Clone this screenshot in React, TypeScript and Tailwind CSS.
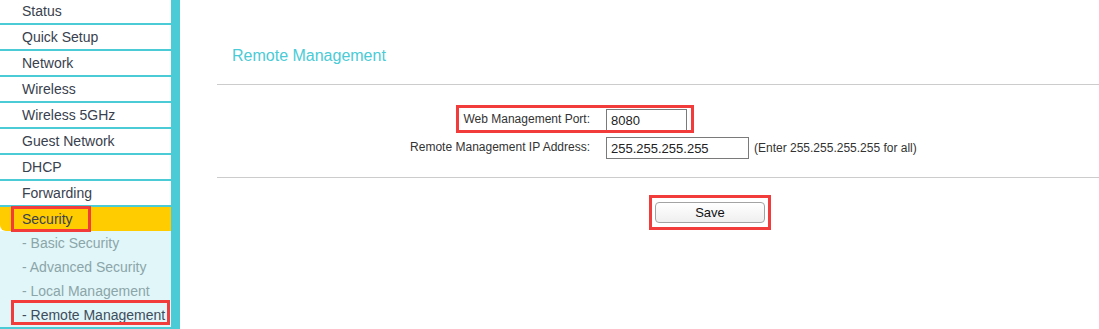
const menuItems = [
  'Status',
  'Quick Setup',
  'Network',
  'Wireless',
  'Wireless 5GHz',
  'Guest Network',
  'DHCP',
  'Forwarding',
]

const subItems = [
  { label: '- Basic Security', active: false },
  { label: '- Advanced Security', active: false },
  { label: '- Local Management', active: false },
  { label: '- Remote Management', active: true },
]

function Sidebar() {
  return (
    <aside className="w-[180px] shrink-0 border-r-[9px] border-[#4acbd6] bg-white">
      <ul>
        {menuItems.map((item, i) => (
          <li
            key={item}
            className={`flex items-center border-b-2 border-[#4acbd6] pl-[22px] text-[14px] text-[#39414e] ${
              i === 0 ? 'h-[25px] pb-px' : 'h-[26px]'
            }`}
          >
            {item}
          </li>
        ))}
        <li className="relative flex h-[24px] items-center rounded-bl-md bg-[#ffcc00] pl-[22px] text-[14px] text-[#39414e]">
          Security
          <span className="absolute left-[11px] top-[-1px] h-[26px] w-[80px] border-[3px] border-[#f23c3c]" />
        </li>
        <li className="border-b-2 border-[#4acbd6] bg-[#e1f6f8]">
          {subItems.map((sub) => (
            <div
              key={sub.label}
              className={`relative flex h-[24px] items-center pl-[22px] text-[14px] ${
                sub.active ? 'text-[#3e4d5c]' : 'text-[#8ba5a9]'
              }`}
            >
              {sub.label}
              {sub.active && (
                <span className="absolute left-[11px] top-[-3px] h-[25px] w-[159px] border-[3px] border-[#f23c3c]" />
              )}
            </div>
          ))}
        </li>
      </ul>
    </aside>
  )
}

export default function App() {
  return (
    <div className="flex h-[329px] w-[1099px] overflow-hidden bg-white font-['Liberation_Sans',Arial,sans-serif]">
      <Sidebar />
      <main className="flex-1 pl-[37px]">
        <h1 className="mt-[46px] pl-[15px] text-[16px] leading-[19px] text-[#4acbd6]">
          Remote Management
        </h1>
        <div className="mt-[19px] border-t border-[#cccccc]" />

        <div className="relative mt-[24px] grid grid-cols-[373px_1fr] gap-x-4 gap-y-[6px] text-[12px] text-[#333]">
          <span className="absolute left-[239px] top-[-4px] h-[28px] w-[238px] border-[3px] border-[#f23c3c]" />

          <label className="flex h-[22px] items-center justify-end pb-[3px]">
            Web Management Port:
          </label>
          <div className="flex items-center">
            <input
              type="text"
              defaultValue="8080"
              className="h-[22px] w-[81px] border border-[#7a7a7a] px-[4px] text-[13px] text-[#222] outline-none"
            />
          </div>

          <label className="flex h-[22px] items-center justify-end pb-[3px]">
            Remote Management IP Address:
          </label>
          <div className="flex items-center gap-[5px]">
            <input
              type="text"
              defaultValue="255.255.255.255"
              className="h-[22px] w-[143px] border border-[#7a7a7a] px-[4px] text-[13px] text-[#222] outline-none"
            />
            <span>(Enter 255.255.255.255 for all)</span>
          </div>
        </div>

        <div className="mt-[18px] border-t border-[#cccccc]" />

        <div className="relative ml-[438px] mt-[24px] w-[110px]">
          <span className="absolute left-[-6px] top-[-7px] h-[35px] w-[122px] border-[3px] border-[#f23c3c]" />
          <button
            type="button"
            className="block h-[21px] w-[110px] rounded-[4px] border border-[#a3a3a3] bg-gradient-to-b from-white to-[#efefef] text-[13px] leading-[19px] text-[#111]"
          >
            Save
          </button>
        </div>
      </main>
    </div>
  )
}
